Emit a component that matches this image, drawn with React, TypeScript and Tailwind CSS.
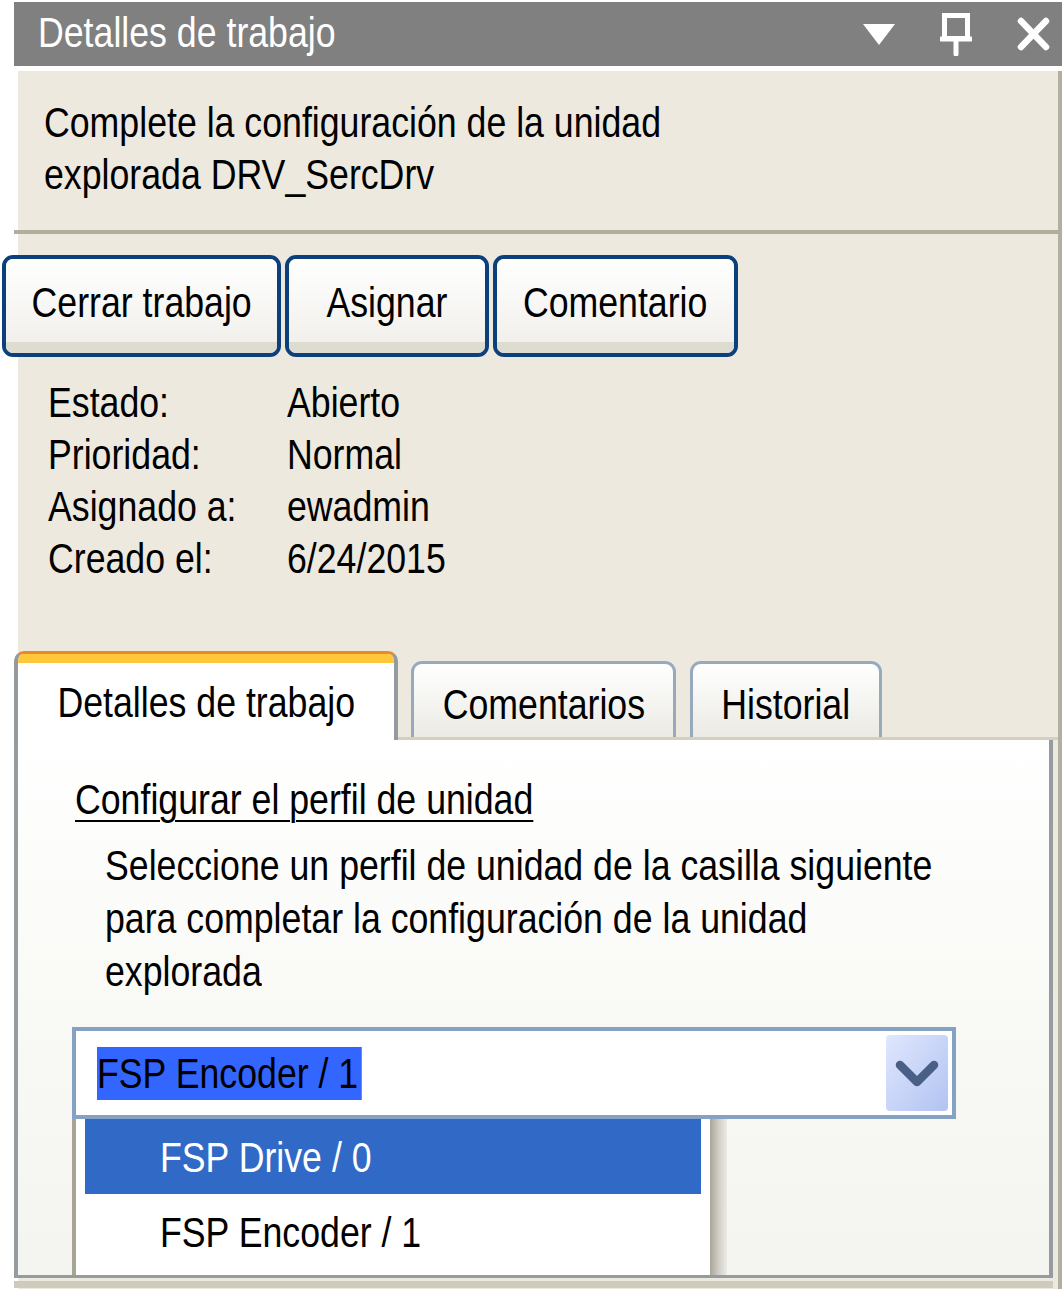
import React from "react";

const font = { fontFamily: '"Liberation Sans", Arial, sans-serif' };

const fields: [string, string][] = [
  ["Estado:", "Abierto"],
  ["Prioridad:", "Normal"],
  ["Asignado a:", "ewadmin"],
  ["Creado el:", "6/24/2015"],
];

// the screenshot uses a narrow Arial; squeeze Liberation Sans to match
function T({ children, center, className = "" }: { children: React.ReactNode; center?: boolean; className?: string }) {
  return (
    <span
      className={`inline-block whitespace-nowrap scale-x-[0.83] ${center ? "origin-center" : "origin-left"} ${className}`}
    >
      {children}
    </span>
  );
}

function ActionButton({ label, width }: { label: string; width: string }) {
  return (
    <div
      className={`${width} h-[102px] rounded-[11px] border-4 border-[#0c407c] overflow-hidden flex flex-col`}
    >
      <div className="flex-1 flex items-center justify-center pt-[3px] bg-gradient-to-b from-white to-[#f1f0ec]">
        <T center>{label}</T>
      </div>
      <div className="h-[11px] bg-[#dedbd0]" />
    </div>
  );
}

export default function App() {
  return (
    <div
      className="relative w-[1064px] h-[1289px] bg-white overflow-hidden text-black text-[43px] leading-[52px]"
      style={font}
    >
      {/* title bar */}
      <div className="mt-[2px] ml-[14px] w-[1048px] h-[64px] bg-[#808080] flex items-center text-white">
        <span className="pl-[24px] -mt-[5px]">
          <T>Detalles de trabajo</T>
        </span>
        <div className="ml-auto flex items-center pr-[12px]">
          <svg width="32" height="21" viewBox="0 0 32 21">
            <polygon points="0,0 32,0 16,21" fill="#fff" />
          </svg>
          <svg width="32" height="43" viewBox="0 0 32 43" className="ml-[45px]">
            <rect x="4.5" y="2.5" width="23" height="23" fill="none" stroke="#fff" strokeWidth="5" />
            <line x1="1" y1="26" x2="31" y2="26" stroke="#fff" strokeWidth="5" strokeLinecap="round" />
            <line x1="16" y1="26" x2="16" y2="41" stroke="#fff" strokeWidth="5" strokeLinecap="round" />
          </svg>
          <svg width="33" height="34" viewBox="0 0 33 34" className="ml-[45px]">
            <line x1="4" y1="4" x2="29" y2="30" stroke="#fff" strokeWidth="6.5" strokeLinecap="round" />
            <line x1="29" y1="4" x2="4" y2="30" stroke="#fff" strokeWidth="6.5" strokeLinecap="round" />
          </svg>
        </div>
      </div>

      {/* beige body */}
      <div className="mt-[5px] ml-[18px] w-[1044px] h-[1218px] bg-[#ede9de] border-r-4 border-[#b3af9f] flex flex-col">
        <div className="pt-[25px] pl-[26px]">
          <div><T>Complete la configuración de la unidad</T></div>
          <div><T>explorada DRV_SercDrv</T></div>
        </div>
        <div className="mt-[30px] -ml-[4px] w-[1046px] h-[4px] bg-[#b2ad9c]" />

        <div className="mt-[21px] -ml-[16px] flex gap-[4px]">
          <ActionButton label="Cerrar trabajo" width="w-[279px]" />
          <ActionButton label="Asignar" width="w-[204px]" />
          <ActionButton label="Comentario" width="w-[245px]" />
        </div>

        <div className="mt-[19px] pl-[30px]">
          {fields.map(([k, v]) => (
            <div key={k} className="flex">
              <span className="w-[239px]"><T>{k}</T></span>
              <span><T>{v}</T></span>
            </div>
          ))}
        </div>

        {/* tabs */}
        <div className="mt-[67px] -ml-[4px] flex items-end h-[89px]">
          <div className="w-[384px] h-[89px] rounded-t-[10px] border-x-4 border-t-[3px] border-[#939b9f] border-t-[#e8892a] bg-white flex flex-col overflow-hidden">
            <div className="h-[9px] bg-[#ffc83a]" />
            <div className="flex-1 flex items-center justify-center pt-[1px]">
              <T center>Detalles de trabajo</T>
            </div>
          </div>
          <div className="flex-1 flex items-end border-b-[3px] border-[#d3d0c1]">
            <div className="ml-[13px] w-[265px] h-[76px] rounded-t-[11px] border-x-[3px] border-t-[3px] border-[#97aabd] bg-gradient-to-b from-white to-[#ebeae4] flex items-center justify-center pt-[7px]">
              <T center>Comentarios</T>
            </div>
            <div className="ml-[14px] w-[192px] h-[76px] rounded-t-[11px] border-x-[3px] border-t-[3px] border-[#97aabd] bg-gradient-to-b from-white to-[#ebeae4] flex items-center justify-center pt-[7px]">
              <T center>Historial</T>
            </div>
            <div className="flex-1" />
          </div>
        </div>

        {/* content panel */}
        <div className="-ml-[4px] w-[1039px] h-[538px] border-x-4 border-b-[3px] border-[#949ca0] bg-gradient-to-b from-white via-[#f9f9f6] to-[#f4f4f0] overflow-hidden">
          <div className="pt-[33px] pl-[57px]">
            <T className="underline underline-offset-[6px] decoration-[2px]">Configurar el perfil de unidad</T>
          </div>
          <div className="mt-[14px] pl-[87px] leading-[53px]">
            <div><T>Seleccione un perfil de unidad de la casilla siguiente</T></div>
            <div><T>para completar la configuración de la unidad</T></div>
            <div><T>explorada</T></div>
          </div>

          <div className="mt-[29px] ml-[54px] w-[884px] h-[92px] border-4 border-[#86a2c2] bg-white flex items-center pl-[21px] pr-[4px]">
            <T className="h-[53px] leading-[53px] bg-[#3366ff] pr-[4px]">FSP Encoder / 1</T>
            <div className="ml-auto self-start mt-[4px] w-[62px] h-[76px] rounded-[4px] bg-gradient-to-br from-[#e0e7fd] to-[#b2c3f2] flex items-center justify-center">
              <svg width="44" height="30" viewBox="0 0 44 30" className="mt-[2px]">
                <polyline
                  points="5,6 22,23 39,6"
                  fill="none"
                  stroke="#4a5f86"
                  strokeWidth="8.5"
                  strokeLinejoin="round"
                  strokeLinecap="round"
                />
              </svg>
            </div>
          </div>

          <div className="ml-[54px] w-[655px] h-[160px] flex">
            <div className="flex-1 border-l-4 border-[#a8a496] bg-white pl-[9px] pr-[9px]">
              <div className="h-[75px] bg-[#3169c6] text-white flex items-center pl-[75px]">
                <T>FSP Drive / 0</T>
              </div>
              <div className="h-[75px] flex items-center pl-[75px]">
                <T>FSP Encoder / 1</T>
              </div>
            </div>
            <div className="w-[17px] bg-gradient-to-r from-[#a9a597] via-[#cfcdc5] to-[#ebeae6]" />
          </div>
        </div>
        <div className="-ml-[4px] mt-[3px] w-[1039px] h-[7px] bg-[#cfcbbc]" />
      </div>
    </div>
  );
}
